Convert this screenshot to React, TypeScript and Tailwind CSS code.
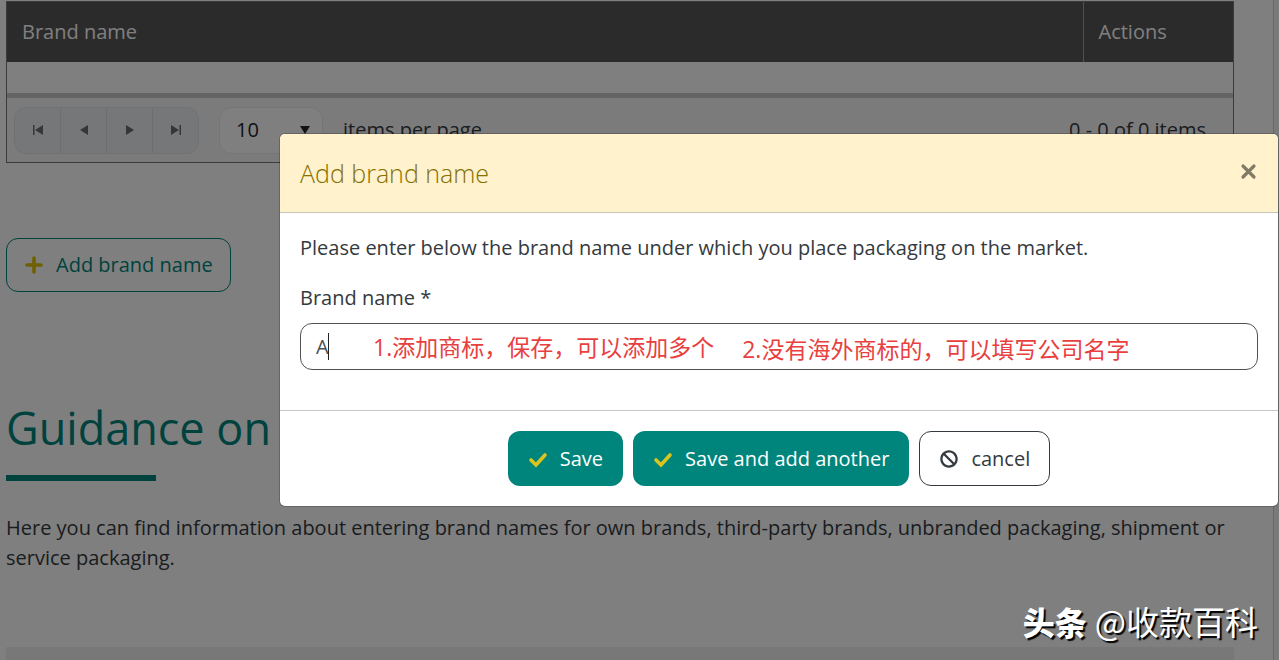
import { useState } from 'react';
import type { ReactNode } from 'react';
import { FaBan } from 'react-icons/fa';

const pagerButtons = [
  { label: 'Go to the first page', path: 'M3 3h1.5v10H3zM13 3v10L5 8z' },
  { label: 'Go to the previous page', path: 'M12 3v10L4 8z' },
  { label: 'Go to the next page', path: 'M4 3v10l8-5z' },
  { label: 'Go to the last page', path: 'M11.5 3H13v10h-1.5zM3 3v10l8-5z' },
];

function LineIcon({ d, width, className }: { d: string; width: number; className?: string }) {
  return (
    <svg
      width="20"
      height="20"
      viewBox="0 0 20 20"
      fill="none"
      stroke="currentColor"
      strokeWidth={width}
      strokeLinecap="round"
      className={className}
    >
      <path d={d} />
    </svg>
  );
}

function Pager() {
  return (
    <div className="flex h-16 items-center bg-[#f7f7f7] px-[7px]">
      <div className="flex h-[47px] overflow-hidden rounded-xl border border-[#dee2e6] bg-[#edeff1]">
        {pagerButtons.map((b) => (
          <button
            key={b.label}
            aria-label={b.label}
            className="flex w-[46px] items-center justify-center border-r border-[#dadde0] text-[#6c6c6c] last:w-[45px] last:border-r-0"
          >
            <svg width="16" height="16" viewBox="0 0 16 16" fill="currentColor">
              <path d={b.path} />
            </svg>
          </button>
        ))}
      </div>
      <div className="relative ml-5">
        <select
          id="page-size"
          defaultValue="10"
          className="block h-[47px] w-[104px] appearance-none rounded-xl border border-[#ebebeb] bg-white pl-4 text-[#212529]"
        >
          <option>10</option>
          <option>20</option>
          <option>50</option>
        </select>
        <svg
          className="pointer-events-none absolute top-[18px] right-3 text-[#212529]"
          width="12"
          height="10"
          viewBox="0 0 12 10"
          fill="currentColor"
        >
          <path d="M1 1h10L6 9z" />
        </svg>
      </div>
      <label htmlFor="page-size" className="ml-5">
        items per page
      </label>
      <span className="mr-5 ml-auto">0 - 0 of 0 items</span>
    </div>
  );
}

function SaveButton({ children }: { children: ReactNode }) {
  return (
    <button className="flex h-[55px] items-center gap-3 rounded-xl bg-[#00857c] px-5 text-white">
      <LineIcon d="M3 11l5 5l9-10" width={3.6} className="text-[#dcc41e]" />
      {children}
    </button>
  );
}

function BrandDialog() {
  const [name, setName] = useState('A');

  return (
    <div
      role="dialog"
      aria-labelledby="dialog-title"
      className="absolute top-[133px] right-0 w-[1000px] rounded-md border border-black/20 bg-white bg-clip-padding"
    >
      <div className="flex h-[79px] items-center justify-between rounded-t-[5px] border-b border-[#c8c4b8] bg-[#fff2cd] px-5">
        <h2 id="dialog-title" className="text-[25px] font-light text-[#857000]">
          Add brand name
        </h2>
        <button aria-label="Close" className="mb-1">
          <LineIcon d="M5 5l11 11M16 5L5 16" width={3.2} className="text-[#807a67]" />
        </button>
      </div>

      <div className="px-5 pt-5 pb-10">
        <p>Please enter below the brand name under which you place packaging on the market.</p>
        <label htmlFor="brand" className="mt-5 mb-2.5 block">
          Brand name *
        </label>
        <div className="relative">
          <input
            id="brand"
            value={name}
            onChange={(e) => setName(e.target.value)}
            className="block h-[47px] w-full rounded-xl border border-[#4f5358] px-[15px] text-[#495057]"
          />
          <span className="absolute top-[10px] left-7 h-[27px] w-px bg-[#212529]" />
          <div className="pointer-events-none absolute top-[9px] left-[73px] flex gap-7 font-['Open_Sans','Noto_Sans_CJK_SC',sans-serif] text-[23px] whitespace-nowrap text-[#e8403f]">
            <span>1.添加商标，保存，可以添加多个</span>
            <span className="pt-0.5">2.没有海外商标的，可以填写公司名字</span>
          </div>
        </div>
      </div>

      <div className="flex justify-center gap-2.5 border-t border-[#c8c8c8] p-5">
        <SaveButton>Save</SaveButton>
        <SaveButton>Save and add another</SaveButton>
        <button className="flex h-[55px] items-center gap-3 rounded-xl border border-[#343a40] px-[19px] text-[#343a40]">
          <FaBan size={20} className="p-px" />
          cancel
        </button>
      </div>
    </div>
  );
}

export default function App() {
  return (
    <div className="relative flex h-screen overflow-hidden bg-white font-['Open_Sans',sans-serif] text-[20px] leading-[30px] text-[#343a40]">
      <main className="min-w-0 flex-1 pt-px pr-[39px] pl-1.5">
        <div className="border border-[#767676]">
          <table className="w-full text-left">
            <thead>
              <tr className="h-[60px] bg-[#565656] text-white">
                <th className="px-[15px] font-normal">Brand name</th>
                <th className="w-[150px] border-l border-[#a0a0a0] px-[15px] font-normal">Actions</th>
              </tr>
            </thead>
            <tbody>
              <tr className="h-[31px]">
                <td colSpan={2} />
              </tr>
            </tbody>
          </table>
          <div className="h-[5px] bg-[#c8c8c8]" />
          <Pager />
        </div>

        <button className="mt-[75px] flex h-[54px] items-center gap-3 rounded-xl border border-[#00857c] px-[17px] text-[#00857c]">
          <LineIcon d="M10 3v14M3 10h14" width={3.6} className="text-[#e0c000]" />
          Add brand name
        </button>

        <h1 className="mt-[106px] text-[45px] leading-[60px] text-[#00857c]">Guidance on</h1>
        <div className="mt-[17px] h-1.5 w-[150px] bg-[#00857c]" />
        <p className="mt-8">
          Here you can find information about entering brand names for own brands, third-party brands, unbranded
          packaging, shipment or service packaging.
        </p>
        <div className="mt-[74px] h-20 bg-[#f0f0f0]" />
      </main>
      <div className="w-1.5 border-l border-[#d0d0d0] bg-[#f4f4f4]" />

      <div className="absolute inset-0 bg-black/50" />
      <BrandDialog />

      <div className="absolute right-[21px] bottom-[17px] flex items-center gap-2 font-['Noto_Sans_CJK_SC',sans-serif] text-[33px] leading-[44px] text-white [text-shadow:2px_2px_1px_#000]">
        <span className="text-[32px] font-black">头条</span>
        <span>@收款百科</span>
      </div>
    </div>
  );
}
